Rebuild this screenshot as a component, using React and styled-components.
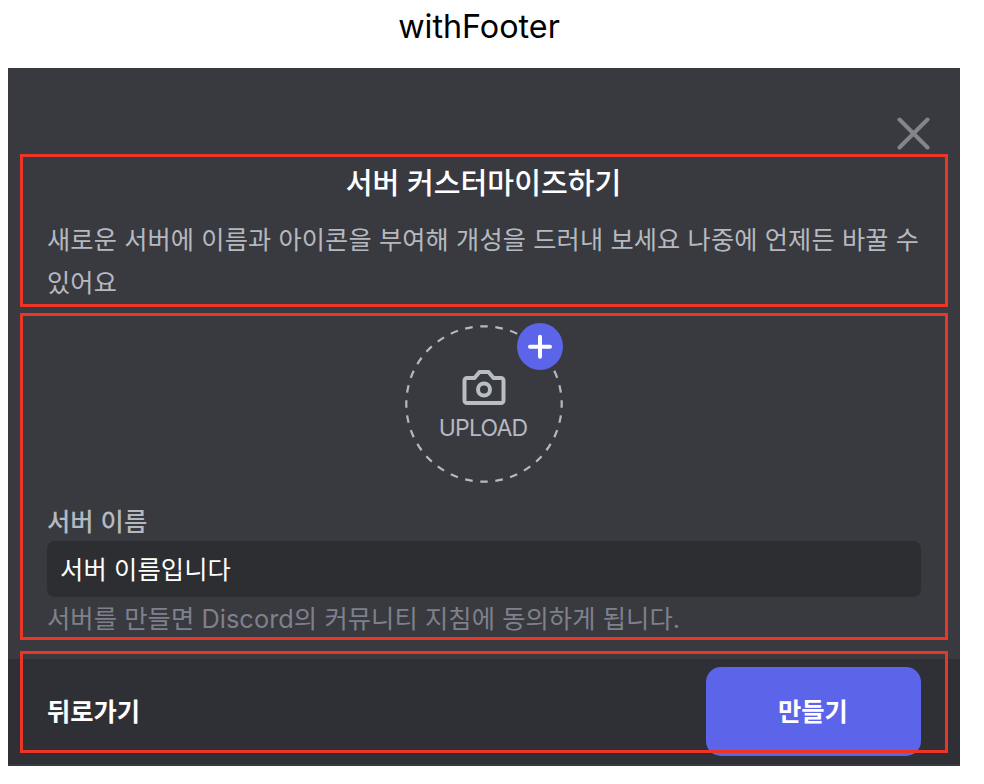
import React from "react";
import styled, { createGlobalStyle } from "styled-components";

const GlobalStyle = createGlobalStyle`
  * { box-sizing: border-box; }
  body {
    margin: 0;
    background: #fff;
    font-family: Inter, "Noto Sans CJK KR", sans-serif;
  }
`;

const Page = styled.main`
  width: 984px;
  height: 784px;
  overflow: hidden;
  background: #fff;
`;

const Caption = styled.h1`
  margin: 0;
  padding-right: 26px;
  height: 68px;
  line-height: 54px;
  text-align: center;
  font-size: 32.3px;
  font-weight: 400;
  color: #000;
`;

const Modal = styled.section`
  display: flex;
  flex-direction: column;
  width: 952px;
  height: 698px;
  margin-left: 8px;
  background: #393a3f;
`;

const TopBar = styled.div`
  display: flex;
  justify-content: flex-end;
  height: 86px;
  padding: 49px 30px 0 0;
`;

const CloseButton = styled.button`
  width: 33px;
  height: 33px;
  padding: 0;
  border: 0;
  background: none;
  svg { display: block; }
`;

const Outlined = styled.div`
  margin: 0 12px;
  border: 3px solid #ec3427;
  padding: 0 24px;
`;

const Header = styled(Outlined)`
  height: 153px;
`;

const Title = styled.h2`
  margin: 0 0 0 -1px;
  height: 56px;
  padding-top: 5px;
  line-height: 43px;
  text-align: center;
  font-size: 29.1px;
  font-weight: 500;
  color: #fff;
`;

const Description = styled.p`
  margin: 6px -10px 0 0;
  line-height: 42.5px;
  font-size: 25.2px;
  letter-spacing: 0.14px;
  color: #b5b9bf;
`;

const Body = styled(Outlined)`
  height: 327px;
  margin-top: 6px;
`;

const UploadArea = styled.div`
  position: relative;
  width: 158px;
  height: 158px;
  margin: 9px auto 0;
`;

const Ring = styled.svg`
  position: absolute;
  inset: 0;
`;

const UploadContent = styled.div`
  display: flex;
  flex-direction: column;
  align-items: center;
  padding-top: 45px;
`;

const UploadText = styled.span`
  line-height: 28px;
  margin: 8px 2px 0 0;
  font-size: 23px;
  letter-spacing: -0.8px;
  color: #b5b9bf;
`;

const PlusBadge = styled.span`
  position: absolute;
  top: -2px;
  right: 0;
  width: 46px;
  height: 47px;
  border-radius: 50%;
  background: #5c65ea;
  svg { display: block; }
`;

const Label = styled.label`
  display: block;
  margin-top: 18px;
  height: 40px;
  line-height: 41px;
  font-size: 25.3px;
  letter-spacing: 0.1px;
  font-weight: 500;
  color: #b5b9bf;
`;

const Field = styled.div`
  height: 56px;
  padding-left: 13px;
  border-radius: 8px;
  background: #2d2e31;
  line-height: 57px;
  font-size: 25.3px;
  letter-spacing: 0.12px;
  color: #fff;
`;

const Hint = styled.p`
  margin: 0;
  line-height: 43px;
  white-space: nowrap;
  font-size: 25.3px;
  letter-spacing: 0.07px;
  color: #7e818b;
`;

const Footer = styled.footer`
  position: relative;
  display: flex;
  align-items: center;
  justify-content: space-between;
  height: 105px;
  margin-top: 19px;
  padding: 0 39px;
  background: #2f3035;
`;

const FooterOutline = styled.span`
  position: absolute;
  left: 12px;
  right: 12px;
  top: -8px;
  height: 102px;
  border: 3px solid #ec3427;
  pointer-events: none;
`;

const FooterButton = styled.button`
  width: ${(p) => (p.$primary ? "215px" : "auto")};
  height: 89px;
  padding: ${(p) => (p.$primary ? "0 1px 4px 0" : "0 0 4px")};
  border: 0;
  border-radius: 15px;
  background: ${(p) => (p.$primary ? "#5c65ea" : "none")};
  font: 700 25.3px Inter, "Noto Sans CJK KR", sans-serif;
  color: #fff;
`;

export default function App() {
  return (
    <Page>
      <GlobalStyle />
      <Caption>withFooter</Caption>
      <Modal>
        <TopBar>
          <CloseButton aria-label="닫기">
            <svg width="33" height="33" viewBox="0 0 33 33" fill="none" stroke="#82858e" strokeWidth="4" strokeLinecap="round">
              <path d="M2.5 2.5l28 28M30.5 2.5l-28 28" />
            </svg>
          </CloseButton>
        </TopBar>
        <Header>
          <Title>서버 커스터마이즈하기</Title>
          <Description>
            새로운 서버에 이름과 아이콘을 부여해 개성을 드러내 보세요 나중에 언제든 바꿀 수 있어요
          </Description>
        </Header>
        <Body>
          <UploadArea>
            <Ring width="158" height="158" viewBox="0 0 158 158" fill="none">
              <circle cx="79" cy="79" r="77.7" stroke="#b5b9bf" strokeWidth="2.2" pathLength="320" strokeDasharray="5 5" strokeDashoffset="2.5" />
            </Ring>
            <UploadContent>
              <svg width="44" height="36" viewBox="0 0 44 36" fill="none" stroke="#b9bec4" strokeWidth="4" strokeLinejoin="round">
                <path d="M5 8h7.5l5-6h9l5 6H39a2.5 2.5 0 0 1 2.5 2.5v20A2.5 2.5 0 0 1 39 33H5a2.5 2.5 0 0 1-2.5-2.5v-20A2.5 2.5 0 0 1 5 8z" />
                <circle cx="22" cy="19.5" r="6" />
              </svg>
              <UploadText>UPLOAD</UploadText>
            </UploadContent>
            <PlusBadge>
              <svg width="46" height="47" viewBox="0 0 46 47" stroke="#fff" strokeWidth="4" strokeLinecap="round">
                <path d="M13 23.7h20M23 13.7v20" />
              </svg>
            </PlusBadge>
          </UploadArea>
          <Label>서버 이름</Label>
          <Field>서버 이름입니다</Field>
          <Hint>서버를 만들면 Discord의 커뮤니티 지침에 동의하게 됩니다.</Hint>
        </Body>
        <Footer>
          <FooterButton>뒤로가기</FooterButton>
          <FooterButton $primary>만들기</FooterButton>
          <FooterOutline />
        </Footer>
      </Modal>
    </Page>
  );
}
